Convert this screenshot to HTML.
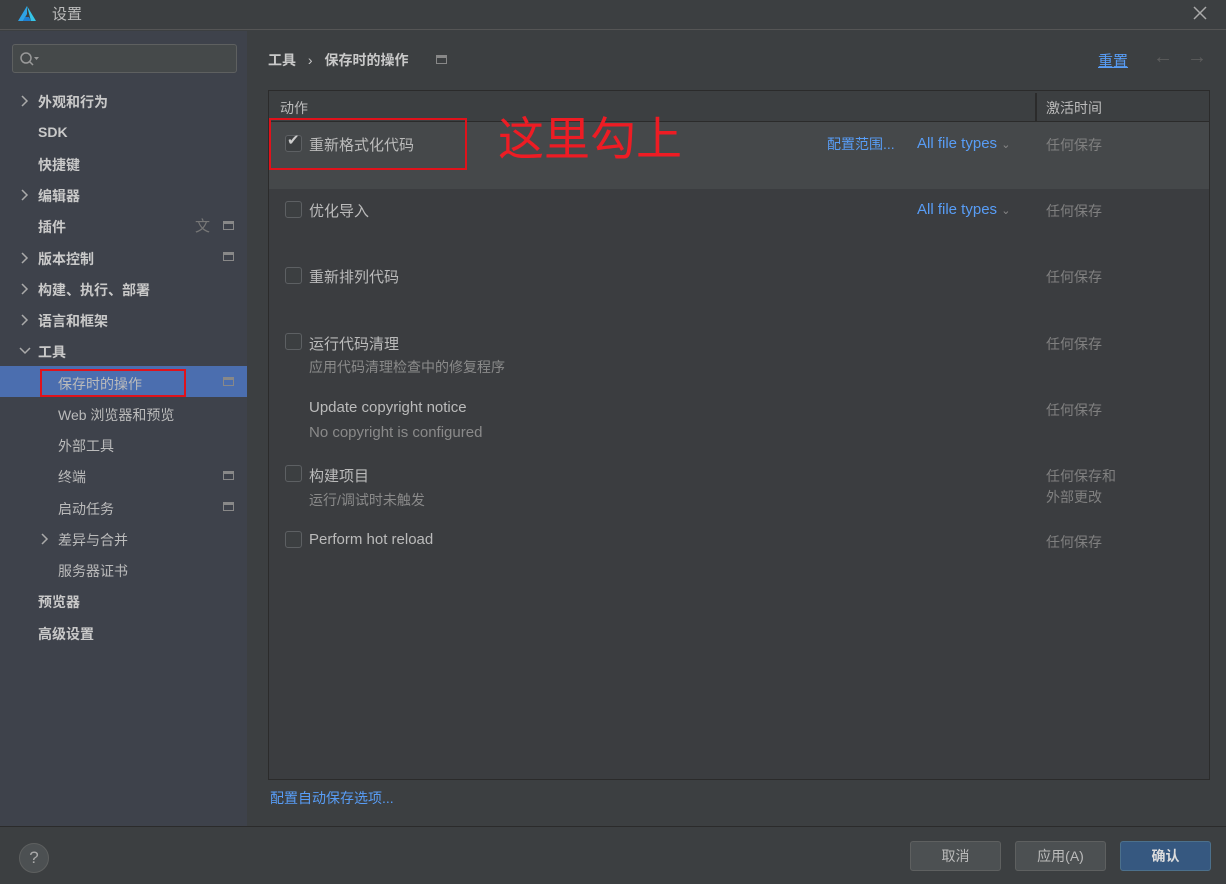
<!DOCTYPE html>
<html><head><meta charset="utf-8"><style>
*{margin:0;padding:0;box-sizing:border-box}
body{width:1226px;height:884px;background:#3c3f41;font-family:"Liberation Sans","Noto Sans CJK SC",sans-serif;color:#bbbbbb;font-size:14px;position:relative;overflow:hidden}
.a{position:absolute;white-space:nowrap}
.title{left:0;top:0;width:1226px;height:30px;border-bottom:1px solid #555;background:#3c3f41}
.side{left:0;top:31px;width:247px;height:795px;background:#3e424b}
.si{position:absolute;left:38px;font-weight:bold;color:#c9c9c9;font-size:14px}
.sc{position:absolute;left:58px;color:#bbb;font-size:14px}
.chev{position:absolute;left:20px;width:10px;height:12px}
.mi{position:absolute;left:223px;width:11px;height:9px;border:1px solid #888;border-top-width:3px}
.box{left:268px;top:90px;width:942px;height:690px;border:1px solid #2b2b2b;background:#3b3d40}
.cb{position:absolute;left:16px;width:17px;height:17px;border:1px solid #5d6063;border-radius:3px;background:#3c3f41}
.rt{position:absolute;left:40px;color:#bbb;font-size:15px}
.sub{position:absolute;left:40px;color:#8a8a8a;font-size:14px}
.any{position:absolute;left:777px;color:#808080;font-size:14px}
.blue{color:#589df6}
.btn{position:absolute;top:841px;height:30px;border:1px solid #5e6060;border-radius:3px;background:#4c5052;color:#bbb;text-align:center;line-height:28px;font-size:14px}
</style></head><body>
<div class="a title"></div>
<svg class="a" style="left:17px;top:5px" width="20" height="18" viewBox="0 0 20 18"><path d="M10 1 L1 16 L6 16 L10 9 Z" fill="#2fa3e6"/><path d="M10 1 L19 16 L14 16 Z" fill="#35c5e8"/><path d="M6 16 L14 16 L12 12 L8 12Z" fill="#1d7fd1"/></svg>
<div class="a" style="left:52px;top:3px;font-size:15px;color:#bbb">设置</div>
<svg class="a" style="left:1193px;top:6px" width="14" height="14"><path d="M1 1L13 13M13 1L1 13" stroke="#aaa" stroke-width="1.5"/></svg>
<div class="a side"></div>
<div class="a" style="left:12px;top:44px;width:225px;height:29px;border:1px solid #5e6060;border-radius:3px;background:#45494a"></div>
<svg class="a" style="left:19px;top:51px" width="22" height="16"><circle cx="7" cy="7" r="5" stroke="#999" fill="none" stroke-width="1.5"/><path d="M10.5 10.5 L14 14" stroke="#999" stroke-width="1.5"/><path d="M15 6 L20 6 L17.5 9Z" fill="#999"/></svg>
<div class="a" style="left:0;top:366px;width:247px;height:31px;background:#4b6eaf"></div>
<div class="a" style="left:40px;top:369px;width:146px;height:28px;border:2px solid #e0121b"></div>
<div class="a" style="left:0;top:0;width:247px;height:884px">
<svg class="chev" style="top:95px"><path d="M2 1L7 6L2 11" stroke="#aaa" stroke-width="1.5" fill="none"/></svg><span class="si" style="top:92px">外观和行为</span>
<span class="si" style="top:124px">SDK</span>
<span class="si" style="top:155px">快捷键</span>
<svg class="chev" style="top:189px"><path d="M2 1L7 6L2 11" stroke="#aaa" stroke-width="1.5" fill="none"/></svg><span class="si" style="top:186px">编辑器</span>
<span class="si" style="top:217px">插件</span><span class="a" style="left:195px;top:215px;color:#777;font-size:15px">文</span><span class="mi" style="top:221px"></span>
<svg class="chev" style="top:252px"><path d="M2 1L7 6L2 11" stroke="#aaa" stroke-width="1.5" fill="none"/></svg><span class="si" style="top:249px">版本控制</span><span class="mi" style="top:252px"></span>
<svg class="chev" style="top:283px"><path d="M2 1L7 6L2 11" stroke="#aaa" stroke-width="1.5" fill="none"/></svg><span class="si" style="top:280px">构建、执行、部署</span>
<svg class="chev" style="top:314px"><path d="M2 1L7 6L2 11" stroke="#aaa" stroke-width="1.5" fill="none"/></svg><span class="si" style="top:311px">语言和框架</span>
<svg class="chev" style="top:345px;width:12px;left:19px"><path d="M1 3L6 8L11 3" stroke="#aaa" stroke-width="1.5" fill="none"/></svg><span class="si" style="top:342px">工具</span>
<span class="sc" style="top:374px">保存时的操作</span><span class="mi" style="top:377px"></span>
<span class="sc" style="top:405px">Web 浏览器和预览</span>
<span class="sc" style="top:436px">外部工具</span>
<span class="sc" style="top:467px">终端</span><span class="mi" style="top:471px"></span>
<span class="sc" style="top:499px">启动任务</span><span class="mi" style="top:502px"></span>
<svg class="chev" style="top:533px;left:40px"><path d="M2 1L7 6L2 11" stroke="#aaa" stroke-width="1.5" fill="none"/></svg><span class="sc" style="top:530px">差异与合并</span>
<span class="sc" style="top:561px">服务器证书</span>
<span class="si" style="top:592px">预览器</span>
<span class="si" style="top:624px">高级设置</span>
</div>
<div class="a" style="left:268px;top:50px;font-weight:bold;font-size:14px;color:#c9c9c9">工具 <span style="font-weight:normal;margin:0 8px">›</span> 保存时的操作</div>
<div class="a" style="left:436px;top:55px;width:11px;height:9px;border:1px solid #888;border-top-width:3px"></div>
<div class="a blue" style="left:1098px;top:50px;font-size:15px;text-decoration:underline">重置</div>
<div class="a" style="left:1153px;top:46px;color:#5d5d5d;font-size:20px">←</div>
<div class="a" style="left:1187px;top:46px;color:#5d5d5d;font-size:20px">→</div>
<div class="a box">
<div style="position:absolute;left:0;top:0;width:940px;height:31px;border-bottom:1px solid #2b2b2b;background:#3c3f41"></div>
<div style="position:absolute;left:766px;top:2px;width:2px;height:28px;background:#2b2b2b"></div>
<span style="position:absolute;left:11px;top:7px">动作</span>
<span style="position:absolute;left:777px;top:7px">激活时间</span>
<div style="position:absolute;left:0;top:31px;width:940px;height:67px;background:#45484a"></div>
<div class="cb" style="top:44px"></div><span style="position:absolute;left:18px;top:40px;color:#ccc;font-size:15px">✔</span>
<span class="rt" style="top:43px">重新格式化代码</span>
<span class="blue" style="position:absolute;left:558px;top:43px;font-size:14px">配置范围...</span>
<span class="blue" style="position:absolute;left:648px;top:44px;font-size:15px">All file types <span style="color:#888;font-size:11px">⌄</span></span>
<span class="any" style="top:44px">任何保存</span>
<div class="cb" style="top:110px"></div><span class="rt" style="top:109px">优化导入</span>
<span class="blue" style="position:absolute;left:648px;top:110px;font-size:15px">All file types <span style="color:#888;font-size:11px">⌄</span></span>
<span class="any" style="top:110px">任何保存</span>
<div class="cb" style="top:176px"></div><span class="rt" style="top:175px">重新排列代码</span><span class="any" style="top:176px">任何保存</span>
<div class="cb" style="top:242px"></div><span class="rt" style="top:242px">运行代码清理</span><span class="sub" style="top:266px">应用代码清理检查中的修复程序</span><span class="any" style="top:243px">任何保存</span>
<span class="rt" style="top:308px">Update copyright notice</span><span class="sub" style="top:333px;font-size:15px">No copyright is configured</span><span class="any" style="top:309px">任何保存</span>
<div class="cb" style="top:374px"></div><span class="rt" style="top:374px">构建项目</span><span class="sub" style="top:399px">运行/调试时未触发</span><span class="any" style="top:375px">任何保存和</span><span class="any" style="top:396px">外部更改</span>
<div class="cb" style="top:440px"></div><span class="rt" style="top:440px">Perform hot reload</span><span class="any" style="top:441px">任何保存</span>
</div>
<div class="a" style="left:269px;top:118px;width:198px;height:52px;border:2px solid #e0121b"></div>
<div class="a" style="left:498px;top:108px;color:#ee1c24;font-size:46px;font-family:'Noto Sans CJK SC',sans-serif;line-height:56px">这里勾上</div>
<div class="a blue" style="left:270px;top:788px;font-size:14px">配置自动保存选项...</div>
<div class="a" style="left:0;top:826px;width:1226px;height:1px;background:#2b2b2b"></div>
<div class="a" style="left:19px;top:843px;width:30px;height:30px;border-radius:50%;background:#4c5052;border:1px solid #5e6060;color:#aaa;text-align:center;line-height:28px;font-size:17px">?</div>
<div class="btn" style="left:910px;width:91px">取消</div>
<div class="btn" style="left:1015px;width:91px">应用(A)</div>
<div class="btn" style="left:1120px;width:91px;background:#365880;border-color:#4c708c;color:#ddd;font-weight:bold">确认</div>
</body></html>
